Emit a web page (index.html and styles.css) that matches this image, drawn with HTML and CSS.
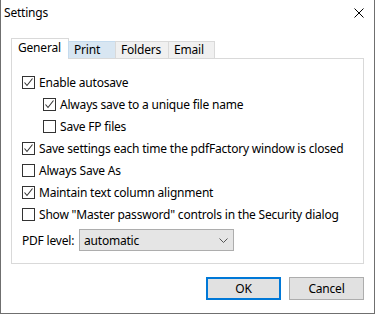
FILE: index.html
```html
<!DOCTYPE html>
<html>
<head>
<meta charset="utf-8">
<link rel="stylesheet" href="styles.css">
</head>
<body>
<div class="window">
  <div class="titlebar">
    <span class="title">Settings</span>
    <svg class="close" width="10" height="10" viewBox="0 0 10 10"><path d="M0.5 0.5 L9.5 9.5 M9.5 0.5 L0.5 9.5" stroke="#000" stroke-width="1" fill="none"/></svg>
  </div>
  <div class="tabs">
    <div class="tab active t-general">General</div>
    <div class="tab hover t-print">Print</div>
    <div class="tab t-folders">Folders</div>
    <div class="tab t-email">Email</div>
  </div>
  <div class="panel">
    <label class="row"><span class="cb checked"><svg width="11" height="11" viewBox="0 0 11 11"><path d="M1.5 5.5 L4 8.5 L9.5 1.5" stroke="#333" stroke-width="1.1" fill="none"/></svg></span>Enable autosave</label>
    <label class="row indent"><span class="cb checked"><svg width="11" height="11" viewBox="0 0 11 11"><path d="M1.5 5.5 L4 8.5 L9.5 1.5" stroke="#333" stroke-width="1.1" fill="none"/></svg></span>Always save to a unique file name</label>
    <label class="row indent"><span class="cb"></span>Save FP files</label>
    <label class="row"><span class="cb checked"><svg width="11" height="11" viewBox="0 0 11 11"><path d="M1.5 5.5 L4 8.5 L9.5 1.5" stroke="#333" stroke-width="1.1" fill="none"/></svg></span>Save settings each time the pdfFactory window is closed</label>
    <label class="row"><span class="cb"></span>Always Save As</label>
    <label class="row"><span class="cb checked"><svg width="11" height="11" viewBox="0 0 11 11"><path d="M1.5 5.5 L4 8.5 L9.5 1.5" stroke="#333" stroke-width="1.1" fill="none"/></svg></span>Maintain text column alignment</label>
    <label class="row"><span class="cb"></span>Show "Master password" controls in the Security dialog</label>
    <div class="level">
      <span class="level-label">PDF level:</span>
      <div class="select">
        <span>automatic</span>
        <svg width="9" height="5" viewBox="0 0 9 5"><path d="M0.5 0.5 L4.5 4.5 L8.5 0.5" stroke="#555" stroke-width="1" fill="none"/></svg>
      </div>
    </div>
  </div>
  <div class="buttons">
    <div class="btn default">OK</div>
    <div class="btn">Cancel</div>
  </div>
</div>
</body>
</html>
```
FILE: styles.css
```css
* { box-sizing: border-box; }
html, body { margin: 0; padding: 0; background: #fff; }
body {
  font-family: "Noto Sans", "Open Sans", sans-serif;
  font-size: 12px;
  letter-spacing: -0.2px;
  color: #000;
}
.window {
  width: 375px;
  height: 314px;
  border-left: 1px solid #6f6f6f;
  border-right: 1px solid #6f6f6f;
  border-bottom: 1px solid #6f6f6f;
  background: #fff;
  display: flex;
  flex-direction: column;
}
.titlebar {
  height: 38px;
  display: flex;
  align-items: flex-start;
  justify-content: space-between;
  padding: 4px 10px 0 3px;
}
.title { font-size: 12px; line-height: 18px; }
.close { margin-top: 4px; }
.tabs {
  display: flex;
  align-items: flex-end;
  height: 20px;
  margin-left: 10px;
  position: relative;
  z-index: 1;
}
.tab {
  height: 17px;
  border: 1px solid #d9d9d9;
  border-bottom: none;
  background: #f0f0f0;
  padding-left: 5px;
  line-height: 16px;
  margin-left: -1px;
}
.tab.active {
  height: 21px;
  margin-bottom: -1px;
  background: #fff;
  padding-left: 6px;
  line-height: 17px;
  margin-left: 0;
}
.tab.hover { background: #d8e6f2; border-color: #c5dbee; }
.t-general { width: 58px; }
.t-print { width: 48px; }
.t-folders { width: 54px; }
.t-email { width: 47px; }
.panel {
  margin-left: 10px;
  width: 353px;
  height: 206px;
  border: 1px solid #d9d9d9;
  padding: 12px 0 0 10px;
  display: flex;
  flex-direction: column;
}
.row {
  height: 22px;
  display: flex;
  align-items: center;
  gap: 4px;
  white-space: nowrap;
}
.row.indent { padding-left: 21px; }
.cb {
  width: 13px;
  height: 13px;
  border: 1px solid #333;
  background: #fff;
  display: flex;
  align-items: center;
  justify-content: center;
  flex: none;
}
.level {
  display: flex;
  align-items: center;
  margin-top: 4px;
  height: 22px;
}
.level-label { width: 57px; }
.select {
  width: 155px;
  height: 22px;
  border: 1px solid #adadad;
  background: #e5e5e5;
  display: flex;
  align-items: center;
  justify-content: space-between;
  padding: 0 5px 0 4px;
}
.buttons {
  display: flex;
  justify-content: flex-end;
  gap: 8px;
  padding: 13px 10px 0 0;
}
.btn {
  width: 75px;
  height: 23px;
  border: 1px solid #adadad;
  background: #e1e1e1;
  display: flex;
  align-items: center;
  justify-content: center;
}
.btn.default { border: 2px solid #0078d7; }
```
